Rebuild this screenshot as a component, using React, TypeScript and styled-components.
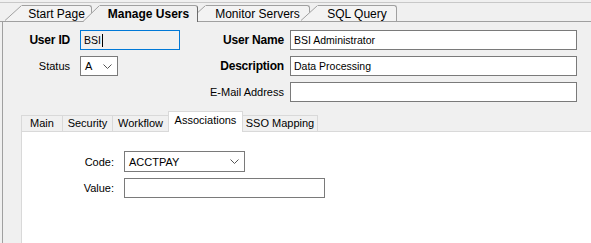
import React from 'react';
import styled, { createGlobalStyle } from 'styled-components';

const GlobalStyle = createGlobalStyle`
  html, body {
    margin: 0;
    padding: 0;
    background: #f0f0f0;
  }
  body {
    font-family: "Liberation Sans", Arial, sans-serif;
    color: #000;
    overflow: hidden;
  }
`;

const Window = styled.div`
  width: 591px;
  height: 243px;
  display: flex;
  flex-direction: column;
  overflow: hidden;
  background: #f0f0f0;
`;

/* document tabs along the top */
const DocStrip = styled.div`
  display: flex;
  align-items: flex-end;
  margin-top: 2px;
  height: 18px;
  padding-left: 5px;
  border-top: 1px solid #c8c8c8;
  border-bottom: 1px solid #a0a0a0;
`;

const DocTabWrap = styled.div<{ $active?: boolean; $w: number; $z: number }>`
  display: flex;
  width: ${(p) => p.$w}px;
  height: ${(p) => (p.$active ? 17 : 16)}px;
  margin-bottom: ${(p) => (p.$active ? -1 : 0)}px;
  margin-left: -9px;
  position: relative;
  z-index: ${(p) => p.$z};
  &:first-child {
    margin-left: 0;
  }
`;

const DocTabBody = styled.div<{ $active?: boolean }>`
  flex: 1;
  display: flex;
  justify-content: center;
  padding-top: 2px;
  box-sizing: border-box;
  background: ${(p) => (p.$active ? '#f0f0f0' : '#f3f3f3')};
  border-top: 1px solid #a0a0a0;
  border-right: 1px solid ${(p) => (p.$active ? '#6b6b6b' : '#a0a0a0')};
  border-top-right-radius: 3px;
  font-size: 12px;
  line-height: 13px;
  font-weight: ${(p) => (p.$active ? 700 : 400)};
  white-space: nowrap;
`;

function DocTab({ label, w, z, active }: { label: string; w: number; z: number; active?: boolean }) {
  const h = active ? 17 : 16;
  const bg = active ? '#f0f0f0' : '#f3f3f3';
  return (
    <DocTabWrap $w={w} $z={z} $active={active}>
      <svg width="17" height={h} style={{ display: 'block', flexShrink: 0 }}>
        <polygon points={`0,${h} 16,0 17,0 17,${h}`} fill={bg} />
        <line x1="0" y1={h - 0.5} x2="16.5" y2="0.5" stroke="#a0a0a0" strokeWidth="1" />
      </svg>
      <DocTabBody $active={active}>{label}</DocTabBody>
    </DocTabWrap>
  );
}

const Page = styled.div`
  flex: 1;
  min-height: 0;
  margin-left: 2px;
  border-left: 1px solid #a0a0a0;
  display: flex;
  flex-direction: column;
`;

/* user header form */
const HeaderGrid = styled.div`
  display: grid;
  grid-template-columns: 77px 100px 110px 287px;
  grid-auto-rows: 20px;
  row-gap: 6px;
  padding-top: 8px;
  align-items: center;
`;

const Label = styled.div<{ $bold?: boolean; $pad: number; $col?: number }>`
  text-align: right;
  padding-right: ${(p) => p.$pad}px;
  font-size: ${(p) => (p.$bold ? 12 : 11)}px;
  font-weight: ${(p) => (p.$bold ? 700 : 400)};
  letter-spacing: ${(p) => (p.$bold ? '-0.2px' : '0')};
  white-space: nowrap;
  ${(p) => (p.$col ? `grid-column: ${p.$col};` : '')}
`;

const TextBox = styled.div<{ $w?: number; $focused?: boolean; $readOnly?: boolean }>`
  box-sizing: border-box;
  width: ${(p) => (p.$w ? `${p.$w}px` : '100%')};
  height: 20px;
  display: flex;
  align-items: center;
  padding-left: 3px;
  border: 1px solid ${(p) => (p.$focused ? '#0078d7' : '#7a7a7a')};
  background: ${(p) => (p.$readOnly ? '#f0f0f0' : '#fff')};
  font-size: 10.5px;
  white-space: nowrap;
`;

const Caret = styled.span`
  display: inline-block;
  width: 1px;
  height: 13px;
  margin-left: 1px;
  background: #000;
`;

const Combo = styled.div<{ $w: number; $h: number }>`
  box-sizing: border-box;
  width: ${(p) => p.$w}px;
  height: ${(p) => p.$h}px;
  display: flex;
  align-items: center;
  justify-content: space-between;
  padding: 0 5px 0 4px;
  border: 1px solid #7a7a7a;
  background: #fff;
  font-size: 11px;
`;

function Chevron() {
  return (
    <svg width="9" height="5" viewBox="0 0 9 5" style={{ display: 'block' }}>
      <polyline points="0.5,0.5 4.5,4.5 8.5,0.5" fill="none" stroke="#555" strokeWidth="1" />
    </svg>
  );
}

/* inner tab control */
const InnerTabs = styled.div`
  flex: 1;
  min-height: 0;
  margin: 9px 0 0 18px;
  display: flex;
  flex-direction: column;
`;

const InnerStrip = styled.div`
  display: flex;
  align-items: flex-end;
  height: 20px;
  border-bottom: 1px solid #d9d9d9;
`;

const InnerTab = styled.div<{ $w: number; $active?: boolean }>`
  box-sizing: border-box;
  width: ${(p) => p.$w}px;
  height: ${(p) => (p.$active ? 21 : 16)}px;
  margin-bottom: ${(p) => (p.$active ? -1 : 0)}px;
  margin-left: -1px;
  display: flex;
  justify-content: center;
  padding-top: ${(p) => (p.$active ? 2 : 1)}px;
  border: 1px solid #d9d9d9;
  border-bottom: none;
  background: ${(p) => (p.$active ? '#fff' : '#f0f0f0')};
  position: relative;
  z-index: ${(p) => (p.$active ? 2 : 1)};
  font-size: 11px;
  line-height: 13px;
  white-space: nowrap;
  &:first-child {
    margin-left: 0;
  }
`;

const Panel = styled.div`
  flex: 1;
  background: #fff;
  border-left: 1px solid #d9d9d9;
`;

const PanelGrid = styled.div`
  display: grid;
  grid-template-columns: 102px auto;
  grid-template-rows: 21px 20px;
  row-gap: 6px;
  padding-top: 19px;
  align-items: center;
  justify-items: start;
  & > ${Label} {
    justify-self: stretch;
  }
`;

const topTabs = [
  { label: 'Start Page', w: 87, z: 1 },
  { label: 'Manage Users', w: 115, z: 10, active: true },
  { label: 'Monitor Servers', w: 121, z: 3 },
  { label: 'SQL Query', w: 96, z: 4 },
];

const innerTabs = [
  { label: 'Main', w: 42 },
  { label: 'Security', w: 51 },
  { label: 'Workflow', w: 57 },
  { label: 'Associations', w: 75, active: true },
  { label: 'SSO Mapping', w: 76 },
];

export default function App() {
  return (
    <Window>
      <GlobalStyle />
      <DocStrip>
        {topTabs.map((t) => (
          <DocTab key={t.label} label={t.label} w={t.w} z={t.z} active={t.active} />
        ))}
      </DocStrip>
      <Page>
        <HeaderGrid>
          <Label $bold $pad={10}>User ID</Label>
          <TextBox $w={100} $focused $readOnly>
            BSI<Caret />
          </TextBox>
          <Label $bold $pad={6}>User Name</Label>
          <TextBox>BSI Administrator</TextBox>

          <Label $pad={10}>Status</Label>
          <Combo $w={38} $h={20}>
            <span>A</span>
            <Chevron />
          </Combo>
          <Label $bold $pad={6}>Description</Label>
          <TextBox>Data Processing</TextBox>

          <Label $pad={6} $col={3}>E-Mail Address</Label>
          <TextBox />
        </HeaderGrid>

        <InnerTabs>
          <InnerStrip>
            {innerTabs.map((t) => (
              <InnerTab key={t.label} $w={t.w} $active={t.active}>
                {t.label}
              </InnerTab>
            ))}
          </InnerStrip>
          <Panel>
            <PanelGrid>
              <Label $pad={10}>Code:</Label>
              <Combo $w={121} $h={21}>
                <span>ACCTPAY</span>
                <Chevron />
              </Combo>
              <Label $pad={10}>Value:</Label>
              <TextBox $w={201} />
            </PanelGrid>
          </Panel>
        </InnerTabs>
      </Page>
    </Window>
  );
}
